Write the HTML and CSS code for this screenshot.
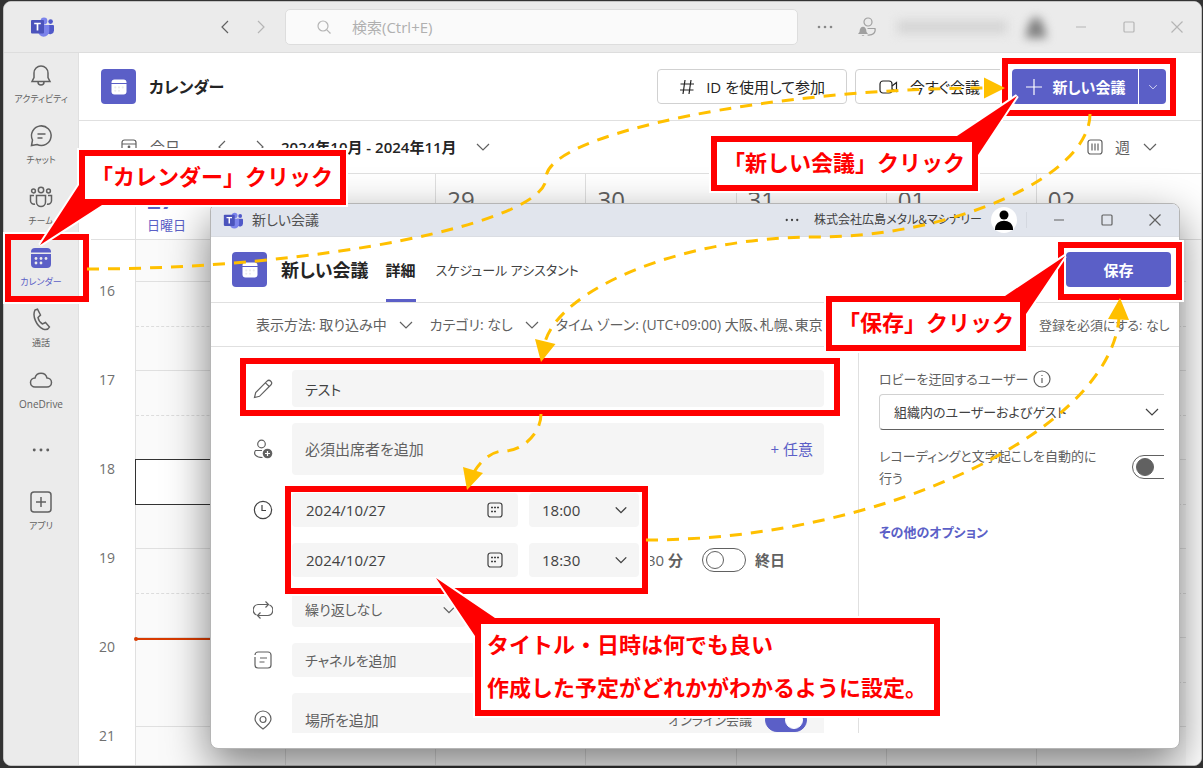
FILE: index.html
```html
<!DOCTYPE html>
<html lang="ja">
<head>
<meta charset="utf-8">
<title>カレンダー - 新しい会議</title>
<link rel="stylesheet" href="styles.css">
</head>
<body>
<svg class="defs" aria-hidden="true">
  <symbol id="teams" viewBox="0 0 24 20">
    <circle cx="14" cy="4" r="3.4" fill="#7b83eb"/><circle cx="20.6" cy="4.6" r="2.3" fill="#5059c9"/>
    <path d="M17 8h6a1 1 0 0 1 1 1v4.500a3.800 3.800 0 0 1-7 2z" fill="#5059c9"/>
    <path d="M8 8h10.500a.8.8 0 0 1 .8.8V14a5.600 5.600 0 0 1-11.300 0z" fill="#7b83eb"/>
    <path d="M9 5h4.500v11H9z" fill="#3d459f"/>
    <rect x="1" y="3" width="13" height="13.500" rx="1" fill="#4b53bc"/>
    <path d="M4.200 6.500h6.600M7.500 6.500v7" stroke="#fff" stroke-width="1.700" fill="none"/>
  </symbol>
  <symbol id="left" viewBox="0 0 16 16"><path d="M11 2L5 8l6 6"/></symbol>
  <symbol id="right" viewBox="0 0 16 16"><path d="M5 2l6 6-6 6"/></symbol>
  <symbol id="down" viewBox="0 0 16 16"><path d="M2 5l6 6 6-6"/></symbol>
  <symbol id="search" viewBox="0 0 16 16"><circle cx="7" cy="7" r="5"/><path d="M10.600 10.600L14.500 14.500"/></symbol>
  <symbol id="dots" viewBox="0 0 16 16"><g fill="currentColor" stroke="none"><circle cx="2" cy="8" r="1.300"/><circle cx="8" cy="8" r="1.300"/><circle cx="14" cy="8" r="1.300"/></g></symbol>
  <symbol id="min" viewBox="0 0 16 16"><path d="M3 8h10"/></symbol>
  <symbol id="max" viewBox="0 0 16 16"><rect x="3" y="3" width="10" height="10" rx="1"/></symbol>
  <symbol id="close" viewBox="0 0 16 16"><path d="M2.500 2.500l11 11M13.500 2.500l-11 11"/></symbol>
  <symbol id="presence" viewBox="0 0 20 20"><circle cx="11" cy="5" r="4"/><path d="M10.500 11.500h7.500c1 4-2 7-7.500 6.500"/><path d="M1 17l1.500-2c0-7 7-7 7 0l1.500 2z M4.500 18h3l-1.500 1z" fill="currentColor" stroke="none"/></symbol>
  <symbol id="bell" viewBox="0 0 24 24"><path d="M3 18.500h18l-2-4V10a7 7 0 0 0-14 0v4.500zM9 19a3 3 0 0 0 6 0"/></symbol>
  <symbol id="chat" viewBox="0 0 24 24"><path d="M2.500 21.500l1-5.500a9.800 9.800 0 1 1 4.500 4.500zM8.500 10h8M8.500 14h5"/></symbol>
  <symbol id="team" viewBox="0 0 24 24"><circle cx="12" cy="5" r="2.700"/><circle cx="4.500" cy="6" r="1.900"/><circle cx="19.500" cy="6" r="1.900"/><path d="M7.500 10.500h9V17a4.500 4.500 0 0 1-9 0zM5 10.500H1.500V16a3.500 3.500 0 0 0 4.500 3M19 10.500h3.500V16a3.500 3.500 0 0 1-4.500 3"/></symbol>
  <symbol id="calfill" viewBox="0 0 24 24"><g stroke="none"><path d="M2 6a4 4 0 0 1 4-4h12a4 4 0 0 1 4 4v.5H2z" fill="currentColor"/><path d="M2 8h20v10a4 4 0 0 1-4 4H6a4 4 0 0 1-4-4z" fill="currentColor"/><g class="cal-dots"><circle cx="7" cy="12.500" r="1.400"/><circle cx="12" cy="12.500" r="1.400"/><circle cx="17" cy="12.500" r="1.400"/><circle cx="7" cy="17" r="1.400"/><circle cx="12" cy="17" r="1.400"/></g></g></symbol>
  <symbol id="phone" viewBox="0 0 24 24"><path d="M6 3l2.500-.8 3 5.800-2.500 2.500c.5 3 2 5 4.500 6.500l3-1.500 4 4.500c-1.500 3-4 3-6.500 2C7.500 19 3 9 6 3z"/></symbol>
  <symbol id="cloud" viewBox="0 0 24 24"><path d="M6 19a4.500 4.500 0 0 1 0-9 6.200 6.200 0 0 1 12 0 4.500 4.500 0 0 1 0 9z"/></symbol>
  <symbol id="apps" viewBox="0 0 24 24"><rect x="2" y="2" width="20" height="20" rx="3"/><path d="M12 7v10M7 12h10"/></symbol>
  <symbol id="hash" viewBox="0 0 16 16"><path d="M6 1L4 15M12 1l-2 14M1.500 5h13.500M1 11h13.500"/></symbol>
  <symbol id="video" viewBox="0 0 20 16"><rect x="1" y="2" width="12" height="12" rx="3"/><path d="M13 7l4.500-3.500v9L13 10"/></symbol>
  <symbol id="plus" viewBox="0 0 18 18"><path d="M9 1v16M1 9h16"/></symbol>
  <symbol id="today" viewBox="0 0 16 16"><rect x="1" y="1" width="14" height="14" rx="2.500"/><path d="M1 5h14"/><circle cx="8" cy="8" r=".8"/></symbol>
  <symbol id="week" viewBox="0 0 16 16"><rect x="1" y="1" width="14" height="14" rx="2.500"/><path d="M5 4.500v7M8 4.500v7M11 4.500v7"/></symbol>
  <symbol id="pencil" viewBox="0 0 20 20"><path d="M1.500 18.500l1.200-5L14 2.200a2.600 2.600 0 0 1 3.800 3.800L6.500 17.300zM12.500 3.800l3.700 3.700"/></symbol>
  <symbol id="invite" viewBox="0 0 20 20"><circle cx="8.500" cy="5" r="3.800"/><path d="M9 11.500H2.500C0 15 3 18.500 9.500 18.500"/><circle cx="14.500" cy="14.500" r="4.800" fill="currentColor" stroke="none"/><path d="M14.500 12v5M12 14.500h5" stroke="#fff"/></symbol>
  <symbol id="clock" viewBox="0 0 20 20"><circle cx="10" cy="10" r="8.600"/><path d="M9 5v5.500h4"/></symbol>
  <symbol id="repeat" viewBox="0 0 20 20"><path d="M3.500 15A5.500 5.500 0 0 1 5 4.500h10M12.500 1.500l3 3-3 3M16.500 5a5.500 5.500 0 0 1-1.500 10.500H5M7.500 12.500l-3 3 3 3"/></symbol>
  <symbol id="channel" viewBox="0 0 20 20"><path d="M2 7v8a3 3 0 0 0 3 3h10a3 3 0 0 0 3-3V5a3 3 0 0 0-3-3H5a3 3 0 0 0-3 3M7 8h7M6.500 12h5"/></symbol>
  <symbol id="pin" viewBox="0 0 20 20"><path d="M10 19C6 16 2 12.500 2 9a8 8 0 0 1 16 0c0 3.500-4 7-8 10z"/><circle cx="10" cy="9.500" r="3"/></symbol>
  <symbol id="date" viewBox="0 0 16 16"><rect x="1" y="1" width="14" height="14" rx="2.500"/><path d="M4 5.500h2M7 5.500h2M10 5.500h2M4 9.500h2M7 9.500h2" stroke-width="1.500"/></symbol>
  <symbol id="info" viewBox="0 0 18 18"><circle cx="9" cy="9" r="8"/><path d="M9 8v5M9 5v1"/></symbol>
</svg>

<div class="desktop">
  <div class="app">
    <header class="titlebar">
      <svg class="logo"><use href="#teams"/></svg>
      <div class="history">
        <button aria-label="戻る"><svg class="i16"><use href="#left"/></svg></button>
        <button class="faint" aria-label="進む"><svg class="i16"><use href="#right"/></svg></button>
      </div>
      <label class="search"><svg class="i16"><use href="#search"/></svg><input type="search" placeholder="検索(Ctrl+E)" aria-label="検索"></label>
      <div class="account">
        <button aria-label="その他"><svg class="i16"><use href="#dots"/></svg></button>
        <svg class="i20"><use href="#presence"/></svg>
        <span class="masked"><i></i><b></b></span>
        <button class="faint" aria-label="最小化"><svg class="i16"><use href="#min"/></svg></button>
        <button class="faint" aria-label="最大化"><svg class="i16"><use href="#max"/></svg></button>
        <button class="faint" aria-label="閉じる"><svg class="i16"><use href="#close"/></svg></button>
      </div>
    </header>
    <div class="workspace">
      <nav class="rail">
        <a href="#a"><svg><use href="#bell"/></svg><span>アクティビティ</span></a>
        <a href="#b"><svg><use href="#chat"/></svg><span>チャット</span></a>
        <a href="#c"><svg><use href="#team"/></svg><span>チーム</span></a>
        <a href="#d" class="active"><svg><use href="#calfill"/></svg><span>カレンダー</span></a>
        <a href="#e"><svg><use href="#phone"/></svg><span>通話</span></a>
        <a href="#f"><svg><use href="#cloud"/></svg><span class="latin">OneDrive</span></a>
        <button class="more" aria-label="その他のアプリ"><svg class="i18"><use href="#dots"/></svg></button>
        <a href="#g"><svg><use href="#apps"/></svg><span>アプリ</span></a>
      </nav>
      <main class="calendar">
        <div class="cal-head">
          <span class="tile"><svg><use href="#calfill"/></svg></span>
          <h1>カレンダー</h1>
          <button class="outline"><svg class="i16"><use href="#hash"/></svg>ID を使用して参加</button>
          <button class="outline now"><svg class="i20"><use href="#video"/></svg>今すぐ会議</button>
          <div class="split">
            <button class="primary"><svg class="i18"><use href="#plus"/></svg>新しい会議</button>
            <button class="primary drop" aria-label="会議オプション"><svg><use href="#down"/></svg></button>
          </div>
        </div>
        <div class="cal-tools">
          <button class="today"><svg class="i16"><use href="#today"/></svg>今日</button>
          <button aria-label="前の週"><svg class="i16"><use href="#left"/></svg></button>
          <button aria-label="次の週"><svg class="i16"><use href="#right"/></svg></button>
          <button class="range">2024年10月 - 2024年11月<svg class="i16"><use href="#down"/></svg></button>
          <button class="view"><svg class="i16"><use href="#week"/></svg>週<svg class="i16"><use href="#down"/></svg></button>
        </div>
        <div class="days">
          <span></span>
          <div class="day current"><b>27</b><small>日曜日</small></div><div class="day"><b>28</b></div><div class="day"><b>29</b></div><div class="day"><b>30</b></div><div class="day"><b>31</b></div><div class="day"><b>01</b></div><div class="day"><b>02</b></div>
        </div>
        <div class="hours">
          <div class="hour partial"><span></span><i></i><i></i><i></i><i></i><i></i><i></i><i></i></div>
          <div class="hour"><span>16</span><i></i><i></i><i></i><i></i><i></i><i></i><i></i></div>
          <div class="hour"><span>17</span><i></i><i></i><i></i><i></i><i></i><i></i><i></i></div>
          <div class="hour"><span>18</span><i class="selected"></i><i></i><i></i><i></i><i></i><i></i><i></i></div>
          <div class="hour"><span>19</span><i></i><i></i><i></i><i></i><i></i><i></i><i></i></div>
          <div class="hour"><span>20</span><i class="nowline"></i><i></i><i></i><i></i><i></i><i></i><i></i></div>
          <div class="hour"><span>21</span><i></i><i></i><i></i><i></i><i></i><i></i><i></i></div>
        </div>
      </main>
    </div>
  </div>

  <section class="dialog" aria-label="新しい会議">
    <header class="dlg-title">
      <svg class="logo"><use href="#teams"/></svg>
      <span class="name">新しい会議</span>
      <button aria-label="その他"><svg class="i14"><use href="#dots"/></svg></button>
      <span class="org">株式会社広島メタル&amp;マシナリー</span>
      <svg class="avatar" viewBox="0 0 26 26"><circle cx="13" cy="13" r="13" fill="#fff"/><circle cx="13" cy="8" r="4.500"/><path d="M4 22c0-11 18-11 18 0v1H4z"/></svg>
      <span class="winbtns">
        <button aria-label="最小化"><svg class="i16"><use href="#min"/></svg></button>
        <button aria-label="最大化"><svg class="i16"><use href="#max"/></svg></button>
        <button aria-label="閉じる"><svg class="i16"><use href="#close"/></svg></button>
      </span>
    </header>
    <div class="dlg-head">
      <span class="tile"><svg><use href="#calfill"/></svg></span>
      <h2>新しい会議</h2>
      <a class="tab on" href="#detail">詳細</a>
      <a class="tab schedule" href="#schedule">スケジュール アシスタント</a>
      <button class="primary save">保存</button>
    </div>
    <div class="dlg-tools">
      <button>表示方法: 取り込み中<svg class="i16"><use href="#down"/></svg></button>
      <button>カテゴリ: なし<svg class="i16"><use href="#down"/></svg></button>
      <button class="zone">タイム ゾーン: (UTC+09:00) 大阪、札幌、東京</button>
      <button class="register">登録を必須にする: なし</button>
    </div>
    <div class="dlg-body">
      <form class="form">
        <div class="row"><svg class="i20"><use href="#pencil"/></svg><input class="field title" value="テスト" aria-label="タイトル"></div>
        <div class="row"><svg class="i20"><use href="#invite"/></svg><div class="field people"><input placeholder="必須出席者を追加" aria-label="必須出席者"><button type="button">+ 任意</button></div></div>
        <div class="row when first">
          <svg class="i20"><use href="#clock"/></svg>
          <label class="field date"><input value="2024/10/27" aria-label="開始日"><svg class="i16"><use href="#date"/></svg></label>
          <label class="field time"><select aria-label="開始時刻"><option>18:00</option></select><svg class="i14"><use href="#down"/></svg></label>
        </div>
        <div class="row when">
          <span class="i20"></span>
          <label class="field date"><input value="2024/10/27" aria-label="終了日"><svg class="i16"><use href="#date"/></svg></label>
          <label class="field time"><select aria-label="終了時刻"><option>18:30</option></select><svg class="i14"><use href="#down"/></svg></label>
          <span class="length">30 <b>分</b></span>
          <label class="allday"><input class="switch" type="checkbox">終日</label>
        </div>
        <div class="row"><svg class="i20"><use href="#repeat"/></svg><label class="field again"><select aria-label="繰り返し"><option>繰り返しなし</option></select><svg class="i14"><use href="#down"/></svg></label></div>
        <div class="row"><svg class="i20"><use href="#channel"/></svg><input class="field channel" placeholder="チャネルを追加" aria-label="チャネル"></div>
        <div class="row"><svg class="i20"><use href="#pin"/></svg><div class="field place"><input placeholder="場所を追加" aria-label="場所"><label>オンライン会議<input class="switch" type="checkbox" checked></label></div></div>
      </form>
      <aside class="options">
        <label class="lobby" for="lobby">ロビーを迂回するユーザー<svg class="i18"><use href="#info"/></svg></label>
        <div class="select"><select id="lobby"><option>組織内のユーザーおよびゲスト</option></select><svg class="i16"><use href="#down"/></svg></div>
        <label class="record"><span>レコーディングと文字起こしを自動的に行う</span><input class="switch" type="checkbox"></label>
        <a href="#more">その他のオプション</a>
      </aside>
    </div>
  </section>

  <div class="mark mark-nav"></div>
  <div class="mark mark-new"></div>
  <div class="mark mark-title"></div>
  <div class="mark mark-when"></div>
  <div class="mark mark-save"></div>

  <svg class="overlay" width="1203" height="768" viewBox="0 0 1203 768" aria-hidden="true">
    <g class="arrow-line">
      <path d="M87 269C316 269 546 223 546 178C546 133 776 88 986 88"/>
      <path d="M1090 114C1090 176 953 237 816 237C679 237 560 290 545 342"/>
      <path d="M541 414C541 433 523 451 504 451C491 451 480 462 474 472"/>
      <path d="M646 540C883 540 1110 430 1119 318"/>
    </g>
    <path class="arrow-head" d="M984 77.500L1005 88L984 98.500zM535 339L555.500 344L541 362zM463 467L483 473L467 490zM1108 319L1129 320L1120 298z"/>
    <g class="bubble">
      <path d="M79 150H346V205H102L40 245L79 185z"/>
      <path d="M711 136H957L1017 96L978 155V191H711z"/>
      <path d="M826 296H1005L1065 256L1026 314V351H826z"/>
      <path d="M475 716V636L436 578L495 618H940V716z"/>
    </g>
  </svg>
  <p class="note note-nav">「カレンダー」クリック</p>
  <p class="note note-new">「新しい会議」クリック</p>
  <p class="note note-save">「保存」クリック</p>
  <p class="note note-when"><span>タイトル・日時は何でも良い</span><span>作成した予定がどれかがわかるように設定。</span></p>
</div>
</body>
</html>
```
FILE: styles.css
```css
* { box-sizing: border-box; }
body {
  margin: 0;
  background: #222;
  color: #424242;
  font: 15px/20px "Open Sans", "Noto Sans CJK JP", sans-serif;
  font-feature-settings: "palt";
}
button, input, select {
  font: inherit;
  font-feature-settings: inherit;
  color: inherit;
  background: none;
  border: 0;
  padding: 0;
  margin: 0;
  outline: 0;
}
select { appearance: none; }
input { min-width: 0; }
input::placeholder { color: #616161; opacity: 1; }
button { display: flex; align-items: center; justify-content: center; white-space: nowrap; }
a { color: inherit; text-decoration: none; }
h1, h2, p { margin: 0; }
svg { fill: none; stroke: currentColor; stroke-width: 1.2; flex: none; }
.defs { position: absolute; width: 0; height: 0; }
.i14 { width: 14px; height: 14px; flex: none; }
.i16 { width: 16px; height: 16px; flex: none; }
.i18 { width: 18px; height: 18px; flex: none; }
.i20 { width: 20px; height: 20px; flex: none; }
.logo { width: 24px; height: 20px; stroke: none; }

.desktop { position: relative; height: 100vh; overflow: hidden; padding: 1px 1px 2px 3px; background: #333; }
.app { height: 100%; display: flex; flex-direction: column; background: #fff; border-radius: 8px; overflow: hidden; border: 1px solid #c4c4c4; }

.titlebar { height: 51px; flex: none; display: flex; align-items: center; background: #ebebeb; border-bottom: 1px solid #ddd; padding: 0 16px 0 26px; color: #888; }
.history { display: flex; gap: 20px; margin: 0 16px 0 163px; color: #616161; }
.faint { color: #b5b5b5; }
.search { flex: 1; height: 36px; display: flex; align-items: center; gap: 20px; padding-left: 30px; background: #fafafa; border: 1px solid #ddd; border-radius: 5px; color: #b5b5b5; }
.search input { flex: 1; }
.search input::placeholder { color: #b0b0b0; }
.account { display: flex; align-items: center; margin-left: 19px; }
.account .i20 { margin-left: 24px; color: #a0a0a0; }
.masked { display: flex; align-items: center; gap: 18px; margin: 0 20px 0 20px; filter: blur(5px); }
.masked i { width: 110px; height: 14px; background: #d6d6d6; }
.masked b { width: 22px; height: 22px; background: #808080; clip-path: polygon(50% 0, 80% 30%, 100% 100%, 0 100%, 20% 30%); }
.account .faint { margin-left: 32px; }
.account .masked + button { margin-left: 6px; }

.workspace { flex: 1; display: flex; min-height: 0; }
.rail { width: 75px; flex: none; background: #ebebeb; border-right: 1px solid #e0e0e0; color: #616161; font-size: 9px; line-height: 12px; }
.rail a { height: 61px; display: flex; flex-direction: column; align-items: center; gap: 6px; padding-top: 10px; white-space: nowrap; }
.rail a svg { width: 24px; height: 24px; stroke-width: 1.5; }
.rail .active { color: #5b5fc7; }
.rail .latin { font-size: 10px; }
.rail .more { width: 100%; height: 61px; }
.cal-dots { fill: #ebebeb; }

.calendar { flex: 1; min-width: 0; background: #fff; }
.cal-head { height: 68px; display: flex; align-items: center; gap: 8px; padding: 0 35px 0 22px; border-bottom: 1px solid #e0e0e0; }
.tile { width: 35px; height: 35px; flex: none; display: grid; place-items: center; background: #5b5fc7; border-radius: 4px; color: #fff; }
.tile svg { width: 18px; height: 18px; }
h1 { flex: 1; margin-left: 5px; color: #242424; font-size: 16px; font-weight: 600; line-height: 24px; }
.outline { height: 35px; gap: 11px; padding: 0 21px; border: 1px solid #d1d1d1; border-radius: 4px; background: #fff; color: #242424; }
.now { padding: 0 20px; width: 149px; }
.split { display: flex; gap: 1px; }
.primary { height: 35px; background: #5b5fc7; color: #fff; border-radius: 4px; font-weight: 600; }
.split .primary { gap: 10px; width: 126px; border-radius: 4px 0 0 4px; }
.split .drop { width: 27px; border-radius: 0 4px 4px 0; }
.drop svg { width: 10px; height: 10px; }

.cal-tools { height: 53px; display: flex; align-items: center; gap: 22px; padding: 0 43px 0 42px; border-bottom: 1px solid #e0e0e0; color: #616161; }
.today { gap: 13px; margin-right: 12px; }
.range { gap: 18px; margin-left: -9px; color: #242424; font-weight: 600; }
.range svg { color: #616161; }
.view { margin-left: auto; gap: 12px; }

.days, .hour { display: grid; grid-template-columns: 56px repeat(7, minmax(0, 1fr)); padding-right: 15px; }
.days { height: 66px; border-bottom: 1px solid #e0e0e0; }
.day { border-left: 1px solid #e0e0e0; padding: 12px 0 0 11px; display: flex; flex-direction: column; color: #616161; }
.day b { font-size: 24px; font-weight: 400; line-height: 28px; }
.day small { font-size: 13px; line-height: 20px; padding-top: 1px; }
.current { color: #5b5fc7; }
.current b { font-weight: 700; }
.hour { height: 89px; }
.hour span { justify-self: center; font-size: 14px; color: #707070; }
.hour i { border-left: 1px solid #e0e0e0; border-top: 1px solid #e0e0e0; background: #fafafa; position: relative; }
.hour i::before { content: ""; position: absolute; left: 0; right: 0; top: 44px; border-top: 1px dashed #ddd; }
.partial { height: 41px; }
.partial i { border-top: 0; }
.partial i::before { display: none; }
.hour .selected::after { content: ""; position: absolute; inset: -1px 0 43px -1px; border: 1px solid #333; background: #fff; }
.hour .nowline::after { content: ""; position: absolute; left: 0; right: 0; top: 0; border-top: 2px solid #d83b01; }
.hour .nowline::before { left: -2px; right: auto; top: -1px; width: 4px; height: 4px; border: 0; border-radius: 50%; background: #d83b01; }

.dialog { position: absolute; left: 210px; right: 23px; top: 203px; bottom: 19px; display: flex; flex-direction: column; background: #fff; border: 1px solid #b5b5b5; border-radius: 8px; overflow: hidden; box-shadow: 0 16px 44px rgba(0, 0, 0, .5); }
.dlg-title { height: 33px; flex: none; display: flex; align-items: center; background: #e1e5ed; border-bottom: 1px solid #dadde3; padding: 0 16px 0 12px; color: #424242; }
.dlg-title .logo { width: 20px; height: 17px; }
.name { flex: 1; margin-left: 9px; font-size: 14px; color: #505050; }
.org { margin: 0 9px 0 15px; font-size: 12px; color: #424242; }
.avatar { width: 26px; height: 26px; fill: #000; stroke: none; }
.winbtns { display: flex; gap: 32px; margin-left: 9px; padding-left: 24px; border-left: 1px solid #d4d8e0; color: #616161; }
.dlg-head { height: 66px; flex: none; display: flex; align-items: center; padding: 0 8px 0 21px; border-bottom: 1px solid #e0e0e0; }
.tile .cal-dots { fill: #5b5fc7; }
h2 { margin: 0 17px 0 14px; color: #242424; font-size: 18px; font-weight: 600; line-height: 24px; }
.tab { align-self: stretch; display: flex; align-items: center; margin-right: 20px; border: solid transparent; border-width: 3px 0; }
.tab.on { color: #242424; font-weight: 600; border-bottom-color: #5b5fc7; }
.schedule { font-size: 13px; }
.save { width: 105px; margin-left: auto; }
.dlg-tools { height: 44px; flex: none; display: flex; align-items: center; gap: 16px; padding-left: 45px; border-bottom: 1px solid #e0e0e0; color: #616161; font-size: 14px; overflow: hidden; }
.dlg-tools button { gap: 11px; }
.dlg-tools .zone { flex: 1; min-width: 0; justify-content: flex-start; overflow: hidden; }
.dlg-tools .register { justify-content: flex-start; width: 140px; font-size: 13px; }

.dlg-body { flex: 1; min-height: 0; display: flex; margin: 0 15px 15px 0; overflow: hidden; }
.form { flex: 1; min-width: 0; display: flex; flex-direction: column; gap: 16px; padding: 23px 34px 0 42px; border-right: 1px solid #e0e0e0; }
.row { display: flex; align-items: center; gap: 19px; color: #616161; }
.field { flex: 1; min-width: 0; height: 34px; display: flex; align-items: center; padding: 0 13px; background: #f5f5f5; border-radius: 4px; }
.field input, .field select { flex: 1; min-width: 0; }
.field.title { height: 37px; color: #424242; font-size: 14px; }
.field.channel { font-size: 14px; }
.people { height: 52px; padding-right: 11px; }
.people button { color: #5b5fc7; }
.when { color: #424242; }
.first { margin-top: 2px; }
.when .field { flex: none; }
.when .date { width: 226px; padding: 0 15px 0 14px; }
.when .date + .time { width: 110px; margin-left: -8px; }
.when .time { padding-right: 11px; }
.time svg, .again svg { stroke-width: 1.6; }
.length { margin: 0 0 0 -11px; color: #616161; }
.length b { font-weight: 600; }
.allday { display: flex; align-items: center; gap: 9px; font-weight: 600; color: #616161; }
.switch { appearance: none; width: 44px; height: 24px; border: 1px solid #616161; border-radius: 12px; padding: 3px; flex: none; display: flex; align-items: center; }
.switch::before { content: ""; width: 16px; height: 16px; border: 1px solid #616161; border-radius: 50%; }
.field .switch { flex: none; width: 42px; }
.switch:checked { background: #5b5fc7; border-color: #5b5fc7; justify-content: flex-end; }
.switch:checked::before { background: #fff; border-color: #fff; }
.field.again { flex: none; width: 174px; padding-right: 10px; font-size: 14px; }
.field.place { height: 54px; padding-right: 17px; }
.place label { display: flex; align-items: center; gap: 13px; font-size: 13px; }

.options { width: 305px; flex: none; padding: 22px 0 0 20px; color: #616161; font-size: 13px; overflow: hidden; }
.lobby { display: flex; align-items: center; gap: 5px; white-space: nowrap; }
.select { width: 310px; height: 36px; display: flex; align-items: center; margin-top: 5px; padding: 0 28px 0 14px; border: 1px solid #d1d1d1; border-bottom-color: #616161; border-radius: 4px; color: #424242; }
.select select { flex: 1; min-width: 0; }
.record { display: flex; align-items: center; justify-content: space-between; width: 297px; margin: 15px 0 33px; line-height: 22px; }
.record span { width: 228px; }
.record .switch::before { background: #616161; }
.options a { color: #5b5fc7; font-weight: 600; }

.mark { position: absolute; border: 6px solid #f00; box-shadow: 0 0 0 2px #fff; }
.mark-nav { left: 5px; top: 234px; width: 84px; height: 68px; }
.mark-new { left: 1002px; top: 58px; width: 174px; height: 58px; }
.mark-title { left: 240px; top: 358px; width: 600px; height: 58px; }
.mark-when { left: 285px; top: 486px; width: 363px; height: 108px; }
.mark-save { left: 1058px; top: 242px; width: 124px; height: 58px; }
.overlay { position: absolute; left: 0; top: 0; pointer-events: none; }
.arrow-line { stroke: #ffc000; stroke-width: 3; stroke-dasharray: 12 9; }
.arrow-head { fill: #ffc000; stroke: none; }
.bubble { fill: #f00; stroke: #fff; stroke-width: 4; paint-order: stroke; }
.note { position: absolute; display: grid; align-content: start; gap: 5px; border: 6px solid #f00; background: #fff; padding: 0 6px; color: #f00; font: 700 22px/38px "Noto Sans CJK JP", sans-serif; font-feature-settings: normal; white-space: nowrap; }
.note-nav { left: 79px; top: 150px; width: 267px; height: 55px; }
.note-new { left: 711px; top: 136px; width: 267px; height: 55px; }
.note-save { left: 826px; top: 296px; width: 200px; height: 55px; }
.note-when { left: 475px; top: 618px; width: 465px; height: 98px; }
```
